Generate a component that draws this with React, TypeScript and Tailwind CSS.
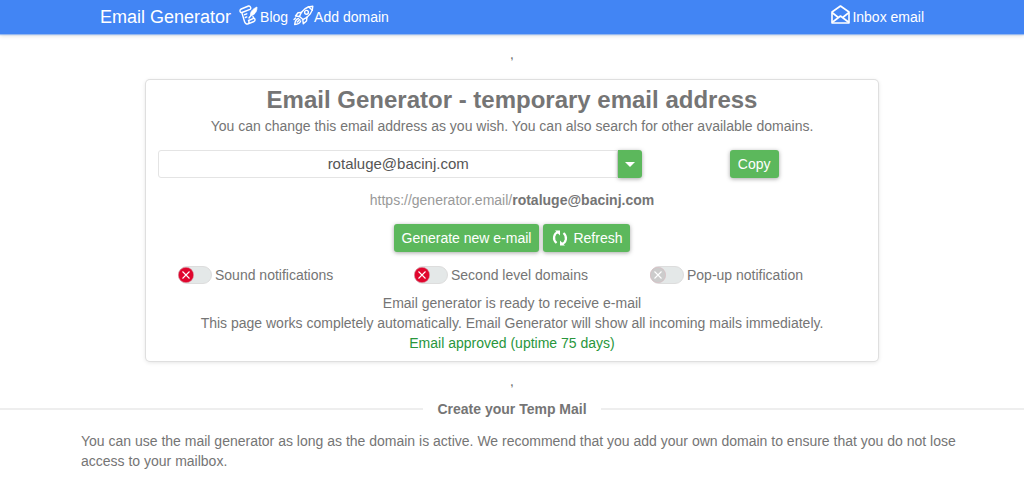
import { useState } from 'react'

const TOGGLES = [
  { id: 'sound', label: 'Sound notifications', disabled: false },
  { id: 'second', label: 'Second level domains', disabled: false },
  { id: 'popup', label: 'Pop-up notification', disabled: true },
]

const BTN = 'h-7 rounded-[3px] px-2 bg-[#5cb85c] text-white shadow-[0_1px_4px_rgba(0,0,0,0.35)] hover:bg-[#4cae4c]'

export default function App() {
  const [email, setEmail] = useState('rotaluge@bacinj.com')

  return (
    <div className="bg-white font-['Liberation_Sans',Arial,sans-serif] text-sm leading-5 text-[#757575]">
      <Navbar />

      <main>
        <p className="mt-3 text-center text-[10px] leading-5 font-bold">,</p>

        <section className="mx-auto mt-[14px] max-w-[732px] rounded-[4px] px-3 pt-1 pb-2 text-center shadow-[0_0_0_1px_#dfdfdf,0_1px_5px_rgba(0,0,0,0.14)]">
          <h1 className="text-2xl leading-8 font-bold">Email Generator - temporary email address</h1>
          <p>You can change this email address as you wish. You can also search for other available domains.</p>

          <div className="mt-[14px] grid grid-cols-[13fr_6fr] items-center">
            <div className="flex h-7">
              <input
                type="text"
                aria-label="Email address"
                value={email}
                onChange={e => setEmail(e.target.value)}
                className="min-w-0 flex-1 rounded-l-[3px] border border-[#e4e4e4] pl-5 text-center text-[15px] text-[#555555] outline-none"
              />
              <button aria-label="Choose domain" className="flex w-6 items-center justify-center rounded-r-[3px] bg-[#5cb85c] shadow-[0_1px_4px_rgba(0,0,0,0.35)]">
                <svg width="10" height="5" viewBox="0 0 10 5" fill="#fff"><path d="M0 0h10L5 5z" /></svg>
              </button>
            </div>
            <div>
              <button className={BTN}>Copy</button>
            </div>
          </div>

          <p className="mt-3 text-[#999999]">
            https://generator.email/<b className="text-[#757575]">{email}</b>
          </p>

          <div className="mt-[14px] flex justify-center gap-1">
            <button className={BTN}>Generate new e-mail</button>
            <button className={`flex items-center gap-1 ${BTN}`}>
              <RefreshIcon />
              Refresh
            </button>
          </div>

          <div className="mt-3 grid grid-cols-3">
            {TOGGLES.map(t => <Toggle key={t.id} {...t} />)}
          </div>

          <p className="mt-2">Email generator is ready to receive e-mail</p>
          <p>This page works completely automatically. Email Generator will show all incoming mails immediately.</p>
          <p className="text-[#28963c]">Email approved (uptime 75 days)</p>
        </section>

        <p className="mt-3 text-center text-[10px] leading-5 font-bold">,</p>

        <div className="mt-[6px] flex items-center gap-[14px]">
          <span className="h-[2px] flex-1 bg-[#eeeeee]" />
          <h2 className="font-bold">Create your Temp Mail</h2>
          <span className="h-[2px] flex-1 bg-[#eeeeee]" />
        </div>
        <p className="mt-3 pr-16 pl-[81px]">
          You can use the mail generator as long as the domain is active. We recommend that you add your own
          domain to ensure that you do not lose access to your mailbox.
        </p>
      </main>
    </div>
  )
}

function Navbar() {
  return (
    <nav className="flex h-[34px] items-center bg-[#4285f4] px-25 text-white shadow-[0_1px_1px_rgba(66,133,244,0.5),0_2px_4px_rgba(0,0,0,0.12)]">
      <a href="#home" className="mr-2 text-lg">Email Generator</a>
      <a href="#blog" className="mr-[5px] flex items-center gap-[2px]">
        <BlogIcon />
        Blog
      </a>
      <a href="#domain" className="flex items-center">
        <RocketIcon />
        Add domain
      </a>
      <a href="#inbox" className="ml-auto flex items-center gap-[2px]">
        <InboxIcon />
        Inbox email
      </a>
    </nav>
  )
}

function Toggle({ id, label, disabled }: { id: string; label: string; disabled: boolean }) {
  const [on, setOn] = useState(false)

  return (
    <div className="flex items-center gap-[3px] pt-px pl-5">
      <span className="relative flex h-[18px] w-[34px]">
        <input
          id={id}
          type="checkbox"
          checked={on}
          disabled={disabled}
          onChange={e => setOn(e.target.checked)}
          className="peer h-full w-full appearance-none rounded-full border border-[#dddddd] bg-[#e4e8e8]"
        />
        <svg
          viewBox="0 0 16 16"
          className="pointer-events-none absolute top-px left-0 h-4 w-4 text-[#e0052d] peer-checked:left-[18px] peer-checked:text-[#5cb85c] peer-disabled:text-[#cccccc]"
        >
          <circle cx="8" cy="8" r="7.700" fill="currentColor" stroke="#d9b3ba" strokeWidth="0.500" />
          <path d="M4.500 4.500l7 7M11.500 4.500l-7 7" stroke="#fff" strokeWidth="1.100" />
        </svg>
      </span>
      <label htmlFor={id}>{label}</label>
    </div>
  )
}

function BlogIcon() {
  return (
    <svg className="mb-[5px]" width="19" height="20" viewBox="0 0 19 20" fill="none" stroke="#fff" strokeWidth="1.4" strokeLinecap="round" strokeLinejoin="round">
      {/* scroll */}
      <path d="M9.500 1L2.200 4C.2 5 .8 8 3 7.500l8-3.200C12.500 3.500 11.500.5 9.500 1zM2.800 7.500l2.700 9c.6 2 2 3 3.700 2.400l5.800-2.400c1.300-.7 1.300-2.300.3-3.300L9.500 15.500c.8 1.200.8 2.300-.2 3.300M14.500 13l-.5-1.500" />
      <path d="M5.500 9.700l2.300-.9M6.300 12.500l1.500-.6" />
      {/* feather */}
      <path d="M11.500 10.300c-.5-3.300 1.800-6.300 6.500-8.300.2 4-1.800 7.500-5.200 8.600z" fill="#fff" strokeWidth="0.700" />
      <path d="M10 13l2.800-3.700" />
    </svg>
  )
}

function RocketIcon() {
  return (
    <svg className="mb-1" width="21" height="21" viewBox="0 0 21 21" fill="none" stroke="#fff" strokeWidth="1.400" strokeLinecap="round" strokeLinejoin="round">
      <path d="M6.500 11.500C8.500 5.500 13 1.500 19.800 1.200c.3 5.300-3.800 10.800-9.800 13.300z" />
      <path d="M15.500 1.800l3.800 3.500" />
      <circle cx="13.500" cy="7.300" r="1.900" />
      <path d="M8.500 7.500L5 7.800 2.500 11l3.800.5M14 12l-.5 4-3.200 2.800-.5-4" />
      <path d="M5.500 13.500c-2 .5-3.500 3-3.800 6 3-.2 5.300-1.500 6-3.500M4.300 17l2.500-2.500M1 14.500l1.500-1.500" />
    </svg>
  )
}

function InboxIcon() {
  return (
    <svg className="mb-[5px]" width="19" height="19" viewBox="0 0 19 19" fill="none" stroke="#fff" strokeWidth="1.600" strokeLinejoin="round">
      <path d="M1 7L9.500 1 18 7v11H1z" />
      <path d="M1 7.500l6.300 5M18 7.500l-6.300 5M1 17.500l8.500-6.500 8.500 6.500" />
    </svg>
  )
}

function RefreshIcon() {
  return (
    <svg width="18" height="16" viewBox="0 0 18 16" fill="none" stroke="#fff" strokeWidth="2.200">
      <path d="M7.500 2C2.500 3 1.500 9.500 5.500 13M10.500 14c5-1 6-7.500 2-11" />
      <path d="M4 .5h5v5zM14 15.500H9v-5z" fill="#fff" stroke="none" />
    </svg>
  )
}
